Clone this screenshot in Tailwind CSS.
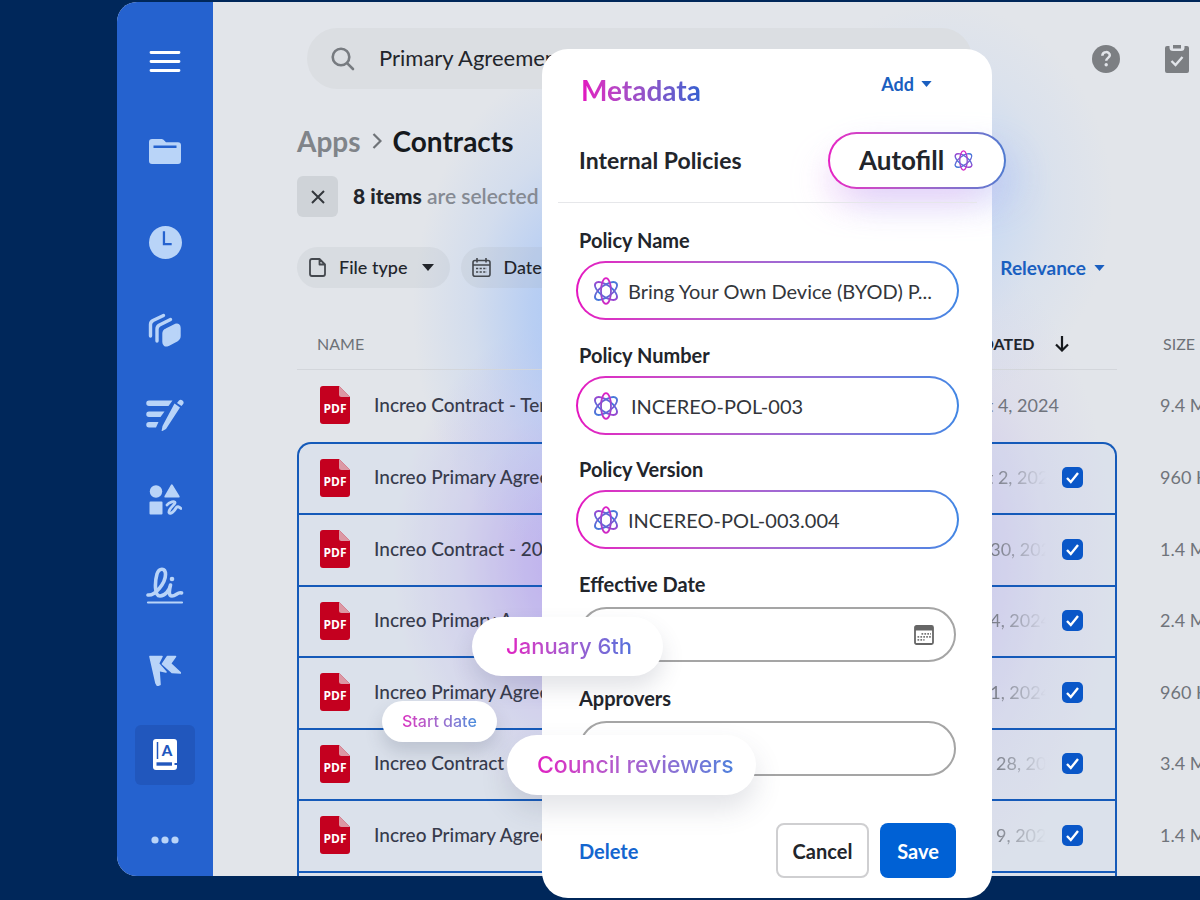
<!DOCTYPE html>
<html lang="en">
<head>
    <meta charset="UTF-8">
    <meta name="viewport" content="width=device-width, initial-scale=1.0">
    <title>Contracts - Metadata</title>
    <script src="https://cdn.jsdelivr.net/npm/@tailwindcss/browser@4"></script>
</head>
<body class="relative h-screen overflow-hidden bg-[#00275a] font-['Lato',sans-serif] text-[#22252b]">

    <!-- Shared gradients and the AI icon -->
    <svg class="absolute size-0" aria-hidden="true">
        <defs>
            <linearGradient id="ai-v" x1="0" y1="0" x2="0" y2="1">
                <stop offset="0" stop-color="#e01fc6" />
                <stop offset="0.55" stop-color="#7d55d0" />
                <stop offset="1" stop-color="#d426c4" />
            </linearGradient>
            <linearGradient id="ai-h" gradientUnits="userSpaceOnUse" x1="2" y1="4" x2="26" y2="24">
                <stop offset="0" stop-color="#c030cc" />
                <stop offset="0.5" stop-color="#3a7bdc" />
                <stop offset="1" stop-color="#c32ccb" />
            </linearGradient>
            <linearGradient id="ai-b" gradientUnits="userSpaceOnUse" x1="2" y1="24" x2="26" y2="4">
                <stop offset="0" stop-color="#2f86dd" />
                <stop offset="0.5" stop-color="#7a58d2" />
                <stop offset="1" stop-color="#2f86dd" />
            </linearGradient>
            <symbol id="ai" viewBox="0 0 28 28">
                <g fill="none" stroke-width="1.8">
                    <ellipse cx="14" cy="14" rx="13" ry="5.800" transform="rotate(36 14 14)" stroke="url(#ai-h)" />
                    <ellipse cx="14" cy="14" rx="13" ry="5.800" transform="rotate(-36 14 14)" stroke="url(#ai-b)" />
                    <ellipse cx="14" cy="14" rx="5" ry="12.800" stroke="url(#ai-v)" />
                </g>
            </symbol>
        </defs>
    </svg>

    <!-- App window -->
    <div class="mt-[2px] ml-[117px] flex h-[calc(100vh-26px)] overflow-hidden rounded-l-[20px] bg-[#e2e5ea]">

        <nav class="flex w-24 shrink-0 flex-col items-center bg-[#2562cf] pt-[15px] text-[#b9d4f8]">
            <button class="flex h-[90px] w-[60px] shrink-0 items-center justify-center" aria-label="Menu">
                <svg class="size-8" viewBox="0 0 32 32" fill="none" stroke="#fff" stroke-width="2.800" stroke-linecap="round"><path d="M2 6.500h28M2 15.500h28M2 24.500h28" /></svg>
            </button>
            <a href="#" class="flex h-[90px] w-[60px] shrink-0 items-center justify-center" aria-label="Files">
                <svg class="size-8" viewBox="0 0 32 32" fill="currentColor"><path d="M0 6a3 3 0 0 1 3-3h9.500a3 3 0 0 1 2 .8L17 6.200h12a3 3 0 0 1 3 3V25a3 3 0 0 1-3 3H3a3 3 0 0 1-3-3z" /><path d="M4.500 10.800h23" stroke="#2562cf" stroke-width="2.400" /></svg>
            </a>
            <a href="#" class="flex h-[90px] w-[60px] shrink-0 items-center justify-center" aria-label="Recents">
                <svg class="size-[33px]" viewBox="0 0 32 32"><circle cx="16" cy="16" r="16" fill="currentColor" /><path d="M14.500 5v12.500H22" fill="none" stroke="#2562cf" stroke-width="2.200" /></svg>
            </a>
            <a href="#" class="flex h-[85px] w-[60px] shrink-0 items-center justify-center" aria-label="Collections">
                <svg class="size-[34px]" viewBox="0 0 34 34" fill="none" stroke="currentColor" stroke-width="3.400" stroke-linecap="round" stroke-linejoin="round"><path d="M2.500 23V11.500Q2.500 9 5 7.500L15.500 2.500M9 28V16q0-2.500 2.500-4L22.500 6.500" /><path fill="currentColor" d="M16 20.500q0-2.500 2.500-3.500l9-4.500q3.500-1 3.500 2.500v8q0 2.500-2.500 4L20 31.500q-4 1.500-4-2.500z" /></svg>
            </a>
            <a href="#" class="flex h-[85px] w-[60px] shrink-0 items-center justify-center" aria-label="Notes">
                <svg class="h-8 w-[38px]" viewBox="0 0 38 32" fill="currentColor"><path d="M3 1.500h23.500l-4 5.500H3a2.700 2.700 0 0 1 0-5.500zM3 12.500h15.500l-4 5.500H3a2.700 2.700 0 0 1 0-5.500zM3 23h9.500l-2.500 5.500H3A2.700 2.700 0 0 1 3 23zM28.500 4.500l5.500 4L20 30l-4.500 2.500 1-5.500zM33 1.500q1.500-1.500 3.500 0t.5 3.800L35.500 7l-4.500-3z" /></svg>
            </a>
            <a href="#" class="flex h-[85px] w-[60px] shrink-0 items-center justify-center" aria-label="Canvas">
                <svg class="size-[34px]" viewBox="0 0 34 34" fill="currentColor"><circle cx="8" cy="8.500" r="6.200" /><path d="M23 1.800q.8-1 1.600 0L31.500 13q.5 1.500-1 1.500H17.500q-1.500 0-1-1.500zM2.500 18.500h11q1 0 1 1v11q0 1-1 1h-11q-1 0-1-1v-11q0-1 1-1z" /><path fill="none" stroke="currentColor" stroke-width="2.800" stroke-linecap="round" stroke-linejoin="round" d="M19 22C21 19 27.500 17.500 27 20C26.500 22 20 26 21 29.500C22.500 32.500 27 27 28 25C29 23 31 23.500 33 25.500" /></svg>
            </a>
            <a href="#" class="flex h-[85px] w-[60px] shrink-0 items-center justify-center" aria-label="Sign">
                <svg class="h-[38px] w-[38px]" viewBox="0 0 38 38" fill="none" stroke="currentColor" stroke-linecap="round" stroke-linejoin="round"><path stroke-width="3.600" d="M2 29C9 30 19.500 17 19.500 8.500C19.500 1.500 13 1.500 11 8C9 15 8 30 14 30C19 30 23.500 24.500 24.500 19C23 25 22.500 30 26 30C30 30 32 25.500 35.500 27" /><circle cx="26" cy="13" r="2.300" fill="currentColor" stroke="none" /><path stroke-width="2.200" d="M2 36.500h34" /></svg>
            </a>
            <a href="#" class="flex h-[85px] w-[60px] shrink-0 items-center justify-center" aria-label="Relay">
                <svg class="size-8" viewBox="0 0 32 32" fill="currentColor" stroke="currentColor" stroke-width="1.600" stroke-linejoin="round"><path d="M1 2.500h12L9.500 9.500l7.500 8.500-7-1.500L11 30.500l-2.500 1L7 29z" /><path d="M18.500 2.500h8L21.500 9.500l10 9.500-8.500-.5L13.500 10z" /></svg>
            </a>
            <a href="#" class="flex h-[85px] w-[60px] shrink-0 items-center justify-center" aria-label="Apps" aria-current="page">
                <span class="flex size-[60px] items-center justify-center rounded-md bg-[#2157bd]">
                    <span class="relative flex h-[31px] w-6 justify-center rounded-[3px] bg-white pl-1 text-[15px] leading-[23px] font-black text-[#2157bd]">A
                        <svg class="absolute inset-0 h-[31px] w-6" viewBox="0 0 24 31" fill="none" stroke="#2157bd"><path stroke-width="1.500" d="M4.500 3v17" /><path stroke-width="3.400" d="M3.500 25H19" /><path stroke-width="2" d="M21.500 25H24" /></svg>
                    </span>
                </span>
            </a>
            <button class="flex h-[85px] w-[60px] shrink-0 items-center justify-center" aria-label="More">
                <svg class="h-2 w-7" viewBox="0 0 28 8" fill="currentColor"><circle cx="4" cy="4" r="3.600" /><circle cx="14" cy="4" r="3.600" /><circle cx="24" cy="4" r="3.600" /></svg>
            </button>
        </nav>

        <main class="min-w-0 flex-1 overflow-hidden bg-[radial-gradient(170px_250px_at_370px_310px,#a9c6f6_0%,#a9c6f6bb_30%,#a9c6f644_65%,#a9c6f600_100%),radial-gradient(190px_250px_at_370px_560px,#b9a2ee_0%,#b9a2eebb_30%,#b9a2ee44_65%,#b9a2ee00_100%),radial-gradient(170px_200px_at_730px_200px,#bcd3f7_0%,#bcd3f799_30%,#bcd3f733_65%,#bcd3f700_100%),radial-gradient(170px_320px_at_730px_560px,#cbc2ec_0%,#cbc2ec99_30%,#cbc2ec33_65%,#cbc2ec00_100%)] pt-[26px] pl-[84px]">
            <header class="flex items-center">
                <label class="ml-[10px] flex h-[61px] w-[665px] shrink-0 items-center rounded-full bg-[#dbdee2] pl-6">
                    <svg class="size-6 shrink-0" viewBox="0 0 24 24" fill="none" stroke="#777b80" stroke-width="2.600" stroke-linecap="round"><circle cx="10" cy="10" r="8.300" /><path d="M16.300 16.300 22 22" /></svg>
                    <input type="search" aria-label="Search" value="Primary Agreement" class="ml-6 min-w-0 flex-1 bg-transparent pb-[2px] text-[22px] outline-none">
                </label>
                <button class="ml-[120px] shrink-0" aria-label="Help">
                    <svg class="size-7" viewBox="0 0 28 28"><circle cx="14" cy="14" r="14" fill="#7c7f83" /><path d="M10.300 10.800c.2-5 7.500-4.600 7.500-.6 0 2.600-3.600 2.800-3.600 5.600" fill="none" stroke="#e2e5ea" stroke-width="2.500" /><circle cx="14.200" cy="19.700" r="1.700" fill="#e2e5ea" /></svg>
                </button>
                <button class="ml-[45px] shrink-0" aria-label="Tasks">
                    <svg class="h-[28px] w-6" viewBox="0 0 24 28"><path fill="#7c7f83" d="M2 1h2.500v1.500q0 3.500 3.500 3.500h8q3.500 0 3.500-3.500V1H22q2 0 2 2v23q0 2-2 2H2q-2 0-2-2V3q0-2 2-2zM8 0h8v3.500H8z" /><path d="m6.500 16 4 4 7-8" fill="none" stroke="#e2e5ea" stroke-width="2.400" /></svg>
                </button>
            </header>

            <nav class="mt-8 flex h-10 items-center text-[28px] font-bold" aria-label="Breadcrumb">
                <a href="#" class="text-[#808489]">Apps</a>
                <svg class="mx-[11px] h-4 w-[10px]" viewBox="0 0 10 16" fill="none" stroke="#6f7378" stroke-width="2.200"><path d="m1.500 1 7 7-7 7" /></svg>
                <h1 class="text-[#16191d]">Contracts</h1>
            </nav>

            <div class="mt-[15px] flex h-[41px] items-center gap-[15px] text-[21px] leading-[41px] whitespace-nowrap">
                <button class="flex size-[41px] items-center justify-center rounded-md bg-[#cfd3d8]" aria-label="Clear selection">
                    <svg class="size-[14px]" viewBox="0 0 14 14" fill="none" stroke="#33373c" stroke-width="2"><path d="m1 1 12 12M13 1 1 13" /></svg>
                </button>
                <p class="pb-[2px] font-semibold text-[#858a93]"><b class="text-[#22252b]">8 items</b> are selected</p>
            </div>

            <div class="mt-[30px] flex items-center justify-between pr-[95px] text-[18px] font-medium">
                <div class="flex gap-[11px]">
                    <button class="flex h-[41px] items-center rounded-full bg-[#a0a8b0]/15 pr-4 pl-3">
                        <svg class="h-[19px] w-[17px]" viewBox="0 0 17 19" fill="none" stroke="#44484e" stroke-width="1.800" stroke-linejoin="round"><path d="M3 1h7.500L16 6.500V16q0 2-2 2H3q-2 0-2-2V3q0-2 2-2zM10.500 1v5.500H16" /></svg>
                        <span class="mr-[15px] ml-[13px]">File type</span>
                        <svg class="h-[7px] w-3" viewBox="0 0 12 7"><path d="M0 0h12L6 7z" fill="#22252b" /></svg>
                    </button>
                    <button class="flex h-[41px] items-center rounded-full bg-[#a0a8b0]/15 pr-4 pl-[11px]">
                        <svg class="size-[19px]" viewBox="0 0 19 19" fill="none" stroke="#44484e" stroke-width="1.600"><rect x="1" y="2.500" width="17" height="15.700" rx="2" /><path d="M1 7h17M5 0v4.500M14 0v4.500" /><path stroke-dasharray="2.200 1.400" d="M4 10.500h11M4 14h11" /></svg>
                        <span class="mr-[15px] ml-3">Date</span>
                        <svg class="h-[7px] w-3" viewBox="0 0 12 7"><path d="M0 0h12L6 7z" fill="#22252b" /></svg>
                    </button>
                </div>
                <button class="flex items-center gap-2 text-[19px] leading-[41px] font-bold text-[#1a5fc0]">Relevance
                    <svg class="h-[6px] w-[11px]" viewBox="0 0 12 7"><path d="M0 0h12L6 7z" fill="currentColor" /></svg>
                </button>
            </div>

            <table class="mt-[30px] w-full table-fixed border-separate border-spacing-0 text-left whitespace-nowrap">
                <colgroup>
                    <col>
                    <col class="w-[86px]">
                    <col class="w-[71px]">
                    <col class="w-[83px]">
                </colgroup>
                <thead>
                    <tr class="h-[52px] text-[16px]">
                        <th class="border-b border-[#d3d6db] pl-5 font-normal text-[#6d7177]">NAME</th>
                        <th colspan="2" class="border-b border-[#d3d6db] font-bold">
                            <span class="flex items-center gap-5">UPDATED
                                <svg class="h-4 w-[14px]" viewBox="0 0 14 16" fill="none" stroke="#16191d" stroke-width="2.200"><path d="M7 0v14.500M1 8.500l6 6 6-6" /></svg>
                            </span>
                        </th>
                        <th class="pl-[46px] font-normal text-[#6d7177]">SIZE</th>
                    </tr>
                </thead>
                <tbody id="rows" class="text-[18px]"></tbody>
            </table>
        </main>
    </div>

    <!-- Metadata panel -->
    <form class="absolute top-[49px] left-[542px] flex h-[849px] w-[450px] flex-col rounded-[26px] bg-white pr-9 pl-[37px]">
        <div class="mt-[21px] flex items-center justify-between pr-6 pl-[2px]">
            <h2 class="bg-linear-to-r from-[#e30fc0] to-[#2f5fd0] bg-clip-text text-[28px] leading-10 font-bold text-transparent">Metadata</h2>
            <button type="button" class="flex items-center gap-[7px] pb-3 text-[18px] font-bold text-[#1a5fc0]">Add
                <svg class="h-[6px] w-[11px]" viewBox="0 0 12 7"><path d="M0 0h12L6 7z" fill="currentColor" /></svg>
            </button>
        </div>

        <div class="mt-[22px] -mr-[50px] flex items-center justify-between">
            <h3 class="text-[23px] font-bold">Internal Policies</h3>
            <button type="button" class="rounded-full bg-linear-to-r from-[#e61fc4] to-[#4f7bd0] p-[2px] shadow-[-12px_20px_36px_-10px_#f3b5f477,12px_16px_36px_-4px_#a9bdf577]">
                <span class="flex h-[53px] w-[174px] items-center gap-[9px] rounded-full bg-white pl-[29px] text-[26px] font-bold">Autofill
                    <svg class="size-[21px]"><use href="#ai" /></svg>
                </span>
            </button>
        </div>
        <hr class="mt-[13px] -mr-[21px] -ml-[21px] border-[#e6e7ea]">

        <div class="mt-[23px] h-[115px]">
            <label for="policy-name" class="block h-[35px] text-[20px] leading-[28px] font-bold">Policy Name</label>
            <div class="-mx-[3px] rounded-full bg-linear-to-r from-[#e414c0] to-[#3f86e4] p-[2px]">
                <div class="flex h-[55px] items-center rounded-full bg-white pl-[14px]">
                    <svg class="size-7 shrink-0"><use href="#ai" /></svg>
                    <input id="policy-name" type="text" value="Bring Your Own Device (BYOD) P..." class="ml-2 w-full min-w-0 rounded-full text-[20px] text-[#33363b] outline-none">
                </div>
            </div>
        </div>
        <div class="h-[114px]">
            <label for="policy-number" class="block h-[35px] text-[20px] leading-[28px] font-bold">Policy Number</label>
            <div class="-mx-[3px] rounded-full bg-linear-to-r from-[#e414c0] to-[#3f86e4] p-[2px]">
                <div class="flex h-[55px] items-center rounded-full bg-white pl-[14px]">
                    <svg class="size-7 shrink-0"><use href="#ai" /></svg>
                    <input id="policy-number" type="text" value="INCEREO-POL-003" class="ml-[11px] w-full min-w-0 rounded-full text-[20px] text-[#33363b] outline-none">
                </div>
            </div>
        </div>
        <div class="h-[115px]">
            <label for="policy-version" class="block h-[35px] text-[20px] leading-[28px] font-bold">Policy Version</label>
            <div class="-mx-[3px] rounded-full bg-linear-to-r from-[#e414c0] to-[#3f86e4] p-[2px]">
                <div class="flex h-[55px] items-center rounded-full bg-white pl-[14px]">
                    <svg class="size-7 shrink-0"><use href="#ai" /></svg>
                    <input id="policy-version" type="text" value="INCEREO-POL-003.004" class="ml-2 w-full min-w-0 rounded-full text-[20px] text-[#33363b] outline-none">
                </div>
            </div>
        </div>
        <div class="h-[114px]">
            <label for="effective-date" class="block h-[37px] text-[20px] leading-[28px] font-bold">Effective Date</label>
            <div class="flex h-[55px] items-center rounded-full border-2 border-[#a5a5a5] pr-5">
                <input id="effective-date" type="text" class="w-full min-w-0 rounded-full outline-none">
                <svg class="size-5 shrink-0" viewBox="0 0 20 20"><rect x="1" y="1" width="18" height="18" rx="1.500" fill="none" stroke="#666" stroke-width="1.800" /><path d="M1 1h18v4.500H1z" fill="#666" /><path d="M7.500 8.800h9.500M3.500 11.800H17M3.500 14.800h7" stroke="#777" stroke-width="1.700" stroke-dasharray="1.700 1.200" /></svg>
            </div>
        </div>
        <div>
            <label for="approvers" class="block h-[37px] text-[20px] leading-[28px] font-bold">Approvers</label>
            <input id="approvers" type="text" class="block h-[55px] w-full rounded-full border-2 border-[#a5a5a5] px-5 outline-none">
        </div>

        <div class="mt-auto mb-5 flex h-[55px] items-center text-[20px] font-bold">
            <button type="button" class="mr-auto text-[#1466cf]">Delete</button>
            <button type="button" class="h-[55px] w-[93px] rounded-lg border-2 border-[#cfcfd1]">Cancel</button>
            <button type="submit" class="ml-[11px] h-[55px] w-[76px] rounded-lg bg-[#0061d5] text-white">Save</button>
        </div>

        <!-- Extracted values floating over the panel -->
        <div class="absolute top-[652px] -left-[160px] rounded-full bg-white px-5 text-[16px] leading-[41px] font-medium whitespace-nowrap shadow-[0_10px_18px_#3a466030] font-['Inter',sans-serif]">
            <span class="bg-linear-to-r from-[#d92cc0] to-[#3f8bdc] bg-clip-text text-transparent">Start date</span>
        </div>
        <div class="absolute top-[568px] -left-[70px] rounded-full bg-white pr-[31px] pl-[34px] text-[22px] leading-[59px] font-medium whitespace-nowrap shadow-[0_12px_22px_#3a466026] font-['Inter',sans-serif]">
            <span class="bg-linear-to-r from-[#e01cc2] to-[#5070dc] bg-clip-text text-transparent">January 6th</span>
        </div>
        <div class="absolute top-[686px] -left-[35px] rounded-full bg-white pr-[22px] pl-[30px] text-[23px] leading-[60px] font-medium whitespace-nowrap shadow-[0_14px_28px_#3a466026] font-['Inter',sans-serif]">
            <span class="bg-linear-to-r from-[#e01cc2] to-[#4c80dc] bg-clip-text text-transparent">Council reviewers</span>
        </div>
    </form>

    <script>
        const files = [
            { name: 'Increo Contract - Terms', date: 'Oct 4, 2024', size: '9.4 MB' },
            { name: 'Increo Primary Agreement', date: 'Oct 2, 2024', size: '960 KB', selected: true },
            { name: 'Increo Contract - 2024', date: 'Jul 30, 2024', size: '1.4 MB', selected: true },
            { name: 'Increo Primary Agreement', date: 'Jul 4, 2024', size: '2.4 MB', selected: true },
            { name: 'Increo Primary Agreement', date: 'Jul 1, 2024', size: '960 KB', selected: true },
            { name: 'Increo Contract', date: 'Jun 28, 2024', size: '3.4 MB', selected: true },
            { name: 'Increo Primary Agreement', date: 'Jun 9, 2024', size: '1.4 MB', selected: true },
            { name: 'Increo Contract', date: 'Jun 2, 2024', size: '2.1 MB', selected: true },
        ];

        const pdfIcon = `
            <svg class="h-[38px] w-[30px] shrink-0" viewBox="0 0 30 38">
                <path d="M3 0h16l11 11v24q0 3-3 3H3q-3 0-3-3V3q0-3 3-3z" fill="#c4001f" />
                <path d="M19 0l11 11h-8.500q-2.500 0-2.500-2.500z" fill="#dc98a4" />
                <text x="15" y="27" text-anchor="middle" font-family="Open Sans" font-weight="700" font-size="12" fill="#fff">PDF</text>
            </svg>`;

        document.getElementById('rows').innerHTML = files.map((file, i) => file.selected ? `
            <tr class="group h-[72px] even:h-[71px]">
                <td class="border-t-2 border-l-2 border-[#155ab9] bg-[#c3d3f0]/20 pb-[2px] pl-[21px] group-nth-2:rounded-tl-[14px]">
                    <span class="flex items-center gap-6 text-[19px] font-medium text-[#373b4c]">${pdfIcon}${file.name}</span>
                </td>
                <td class="overflow-hidden border-t-2 border-[#155ab9] bg-[#c3d3f0]/20 pb-[2px] pl-1">
                    <span class="block mask-r-from-30% mask-r-to-100% text-[#70747d]">${file.date}</span>
                </td>
                <td class="border-t-2 border-r-2 border-[#155ab9] bg-[#c3d3f0]/20 pb-[2px] pl-4 group-nth-2:rounded-tr-[14px]">
                    <span class="relative block size-[21px]">
                        <input type="checkbox" checked aria-label="Select ${file.name} ${i}" class="block size-[21px] appearance-none rounded-[5px] bg-[#0a57c8]">
                        <svg class="pointer-events-none absolute inset-0 size-[21px]" viewBox="0 0 21 21" fill="none" stroke="#fff" stroke-width="2.400"><path d="m5 11 3.800 4L16 6" /></svg>
                    </span>
                </td>
                <td class="pl-[43px] text-[#70747b]">${file.size}</td>
            </tr>` : `
            <tr class="h-[72px]">
                <td class="pb-[2px] pl-[23px]">
                    <span class="flex items-center gap-6 text-[19px] font-medium text-[#373b4c]">${pdfIcon}${file.name}</span>
                </td>
                <td colspan="2" class="pb-[2px] pl-1 text-[#70747d]">${file.date}</td>
                <td class="pb-[2px] pl-[43px] text-[#70747b]">${file.size}</td>
            </tr>`).join('');
    </script>
</body>
</html>
